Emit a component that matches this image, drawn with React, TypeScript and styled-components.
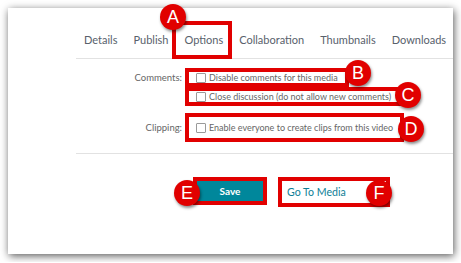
import React from "react";
import styled, { createGlobalStyle } from "styled-components";

const GlobalStyle = createGlobalStyle`
  html, body {
    margin: 0;
    padding: 0;
    background: #fff;
  }
  body {
    padding: 8px;
    font-family: Lato, "Liberation Sans", sans-serif;
  }
`;

const annotationRed = "#e10000";

const Card = styled.div`
  position: relative;
  width: 445px;
  height: 246px;
  box-sizing: border-box;
  background: #fff;
  box-shadow: 1px 2px 8px rgba(0, 0, 0, 0.65);
  padding: 13px 0 0 68px;
`;

const TabBar = styled.nav`
  display: flex;
  height: 37px;
  border-bottom: 1px solid #e2e2e2;
`;

const Tab = styled.div<{ $marked?: boolean }>`
  position: relative;
  display: flex;
  align-items: center;
  padding: 0 8px;
  font-size: 11px;
  color: #58616c;
  white-space: nowrap;

  ${(p) =>
    p.$marked &&
    `
    &::after {
      content: "";
      position: absolute;
      top: 0;
      bottom: -1px;
      left: -4px;
      right: -1px;
      border: 4px solid ${annotationRed};
    }
  `}
`;

const Form = styled.div`
  display: flex;
  flex-direction: column;
  padding-top: 9px;
  border-bottom: 1px solid #e2e2e2;
  height: 95px;
  box-sizing: border-box;
`;

const FieldRow = styled.div<{ $gap?: number; $top?: boolean }>`
  display: flex;
  align-items: ${(p) => (p.$top ? "flex-start" : "center")};
  margin-top: ${(p) => p.$gap ?? 0}px;
`;

const Label = styled.div`
  width: 109px;
  text-align: right;
  font-size: 9.5px;
  line-height: 19px;
  color: #666;
  padding-right: 3px;
  box-sizing: border-box;
  white-space: nowrap;
`;

const Options = styled.div`
  display: flex;
  flex-direction: column;
`;

const Marked = styled.div<{ $pad?: number }>`
  display: flex;
  align-items: center;
  border: 4px solid ${annotationRed};
  padding: ${(p) => p.$pad ?? 0}px 0;
  box-sizing: border-box;
  align-self: flex-start;
`;

const CheckLabel = styled.label`
  display: flex;
  align-items: center;
  gap: 3px;
  padding: 0 7px 0 7px;
  font-size: 9px;
  line-height: 11px;
  color: #666;
  white-space: nowrap;
`;

const Box = styled.span`
  width: 8px;
  height: 8px;
  border: 1px solid #9a9a9a;
  border-radius: 1px;
  background: #fff;
`;

const Actions = styled.div`
  display: flex;
  gap: 11px;
  padding: 23px 0 0 117px;
`;

const SaveButton = styled.button`
  width: 66px;
  height: 20px;
  border: 0;
  background: #00879b;
  color: #fff;
  font-family: Lato, "Liberation Sans", sans-serif;
  font-weight: 700;
  font-size: 10px;
`;

const LinkButton = styled.a`
  display: flex;
  align-items: center;
  height: 20px;
  padding: 0 40px 0 5px;
  font-size: 10.6px;
  color: #0d7e96;
  text-decoration: none;
`;

const Badge = styled.div<{ $x: number; $y: number }>`
  position: absolute;
  left: ${(p) => p.$x - 13}px;
  top: ${(p) => p.$y - 13}px;
  width: 26px;
  height: 26px;
  border-radius: 50%;
  background: ${annotationRed};
  color: #fff;
  display: flex;
  align-items: center;
  justify-content: center;
  font-family: "Liberation Sans", Arial, sans-serif;
  font-size: 18px;
  box-shadow: 1px 2px 3px rgba(0, 0, 0, 0.45);
  z-index: 2;
`;

const badges = [
  { id: "A", x: 165, y: 9 },
  { id: "B", x: 350, y: 65 },
  { id: "C", x: 400, y: 87 },
  { id: "D", x: 403, y: 121 },
  { id: "E", x: 179, y: 185 },
  { id: "F", x: 371, y: 185 },
];

const tabs = ["Details", "Publish", "Options", "Collaboration", "Thumbnails", "Downloads"];

export default function App() {
  return (
    <>
      <GlobalStyle />
      <Card>
        <TabBar>
          {tabs.map((t) => (
            <Tab key={t} $marked={t === "Options"}>
              {t}
            </Tab>
          ))}
        </TabBar>

        <Form>
          <FieldRow $top>
            <Label>Comments:</Label>
            <Options>
              <Marked>
                <CheckLabel>
                  <Box />
                  Disable comments for this media
                </CheckLabel>
              </Marked>
              <Marked>
                <CheckLabel>
                  <Box />
                  Close discussion (do not allow new comments)
                </CheckLabel>
              </Marked>
            </Options>
          </FieldRow>

          <FieldRow $gap={7}>
            <Label>Clipping:</Label>
            <Marked $pad={5}>
              <CheckLabel>
                <Box />
                Enable everyone to create clips from this video
              </CheckLabel>
            </Marked>
          </FieldRow>
        </Form>

        <Actions>
          <Marked>
            <SaveButton>Save</SaveButton>
          </Marked>
          <Marked $pad={1}>
            <LinkButton href="#">Go To Media</LinkButton>
          </Marked>
        </Actions>

        {badges.map((b) => (
          <Badge key={b.id} $x={b.x} $y={b.y}>
            {b.id}
          </Badge>
        ))}
      </Card>
    </>
  );
}
